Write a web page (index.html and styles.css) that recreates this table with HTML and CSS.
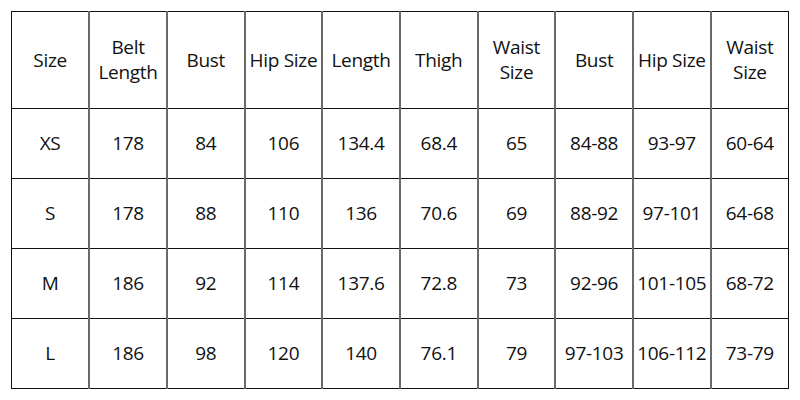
FILE: index.html
```html
<!DOCTYPE html>
<html>
<head>
<meta charset="utf-8">
<link rel="stylesheet" href="styles.css">
</head>
<body>
<table class="chart">
  <tr class="head">
    <td>Size</td><td>Belt<br>Length</td><td>Bust</td><td>Hip Size</td><td>Length</td><td>Thigh</td><td>Waist<br>Size</td><td>Bust</td><td>Hip Size</td><td>Waist<br>Size</td>
  </tr>
  <tr><td>XS</td><td>178</td><td>84</td><td>106</td><td>134.4</td><td>68.4</td><td>65</td><td>84-88</td><td>93-97</td><td>60-64</td></tr>
  <tr><td>S</td><td>178</td><td>88</td><td>110</td><td>136</td><td>70.6</td><td>69</td><td>88-92</td><td>97-101</td><td>64-68</td></tr>
  <tr><td>M</td><td>186</td><td>92</td><td>114</td><td>137.6</td><td>72.8</td><td>73</td><td>92-96</td><td>101-105</td><td>68-72</td></tr>
  <tr><td>L</td><td>186</td><td>98</td><td>120</td><td>140</td><td>76.1</td><td>79</td><td>97-103</td><td>106-112</td><td>73-79</td></tr>
</table>
</body>
</html>
```
FILE: styles.css
```css
html, body { margin: 0; padding: 0; background: #fff; }
body { padding: 11px 0 0 11px; }
.chart {
  border-collapse: collapse;
  table-layout: fixed;
  width: 778px;
  font-family: "Open Sans", sans-serif;
  font-size: 19px;
  letter-spacing: -0.3px;
  color: #111;
}
.chart td {
  height: 69px;
  padding: 0;
  text-align: center;
  vertical-align: middle;
  border-top: 1px solid #111;
  border-bottom: 1px solid #111;
  border-left: 2px solid #6a6a6a;
  border-right: 2px solid #6a6a6a;
  line-height: 25px;
  white-space: nowrap;
}
.chart td:first-child { border-left: 1px solid #111; }
.chart td:last-child { border-right: 1px solid #111; }
.chart .head td { height: 96px; }
```
